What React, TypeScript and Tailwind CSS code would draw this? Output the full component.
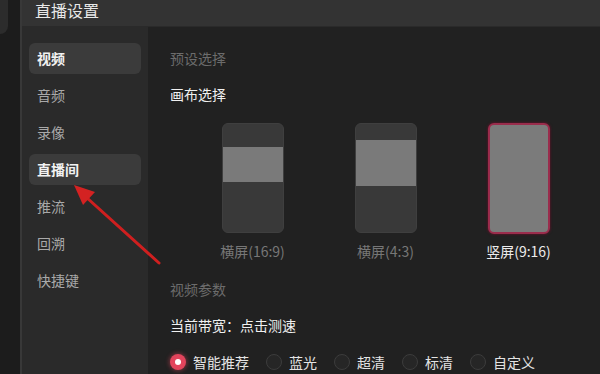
import React from "react";

const font = { fontFamily: '"Noto Sans CJK SC", "Noto Sans", sans-serif' };

function Radio({ checked, label }: { checked?: boolean; label: string }) {
  return (
    <div className="flex items-center gap-[7px]">
      {checked ? (
        <div className="w-[16px] h-[16px] rounded-full bg-[#e2445c] flex items-center justify-center shadow-[0_0_4px_1px_rgba(226,68,92,0.45)]">
          <div className="w-[6px] h-[6px] rounded-full bg-white" />
        </div>
      ) : (
        <div className="w-[16px] h-[16px] rounded-full border border-[#3c3c3c] bg-[#262626]" />
      )}
      <span className="text-[14px] leading-[18px] text-[#e4e4e4]">{label}</span>
    </div>
  );
}

export default function App() {
  const items = ["视频", "音频", "录像", "直播间", "推流", "回溯", "快捷键"];
  const selected = [0, 3];
  return (
    <div className="relative w-[600px] h-[374px] overflow-hidden bg-[#1c1c1c] flex" style={font}>
      <div className="w-[20px] shrink-0 bg-[#1c1c1c]">
        <div className="w-[8px] h-[34px] bg-[#2c2c2c] rounded-br-[8px]" />
      </div>
      <div className="flex-1 flex flex-col border-l-2 border-[#383838]">
        <div className="h-[27px] shrink-0 bg-[#333333] border-b border-[#2a2a2a] flex items-start pl-[13px] pt-[1px]">
          <span className="text-[16px] leading-[19px] text-[#e8e8e8]">直播设置</span>
        </div>
        <div className="flex-1 flex">
          <div className="w-[126px] shrink-0 bg-[#2a2a2a] px-[7px] pt-[16px] flex flex-col gap-[6px]">
            {items.map((t, i) => {
              const sel = selected.includes(i);
              return (
                <div
                  key={t}
                  className={
                    sel
                      ? "h-[31px] rounded-[6px] bg-[#3b3b3b] flex items-center pl-[8px] text-[14px] text-[#f2f2f2] font-bold"
                      : "h-[31px] rounded-[6px] flex items-center pl-[8px] text-[14px] text-[#a9a9a9]"
                  }
                >
                  {t}
                </div>
              );
            })}
          </div>
          <div className="flex-1 bg-[#212121] pl-[22px] pt-[22px] flex flex-col">
            <div className="text-[14px] leading-[18px] text-[#6c6c6c]">预设选择</div>
            <div className="mt-[18px] text-[14px] leading-[18px] text-[#f0f0f0]">画布选择</div>
            <div className="mt-[20px] ml-[16px] grid grid-cols-[133px_133px_133px]">
              <div className="flex flex-col items-center">
                <div className="w-[62px] h-[110px] rounded-[6px] bg-[#393939] border border-[#3f3f3f] overflow-hidden flex flex-col">
                  <div className="h-[23px]" />
                  <div className="h-[35px] bg-[#7a7a7a]" />
                </div>
                <div className="mt-[9px] text-[14px] leading-[18px] text-[#777777]">横屏(16:9)</div>
              </div>
              <div className="flex flex-col items-center">
                <div className="w-[62px] h-[110px] rounded-[6px] bg-[#393939] border border-[#3f3f3f] overflow-hidden flex flex-col">
                  <div className="h-[16px]" />
                  <div className="h-[46px] bg-[#7a7a7a]" />
                </div>
                <div className="mt-[9px] text-[14px] leading-[18px] text-[#777777]">横屏(4:3)</div>
              </div>
              <div className="flex flex-col items-center">
                <div className="w-[62px] h-[111px] rounded-[6px] bg-[#7b7b7b] border-2 border-[#9a2c4c] shadow-[0_0_2px_1px_rgba(90,20,40,0.7)]" />
                <div className="mt-[8px] text-[14px] leading-[18px] text-[#ececec]">竖屏(9:16)</div>
              </div>
            </div>
            <div className="mt-[20px] text-[14px] leading-[18px] text-[#6c6c6c]">视频参数</div>
            <div className="mt-[18px] text-[14px] leading-[18px] text-[#f0f0f0]">当前带宽：点击测速</div>
            <div className="mt-[19px] flex items-center gap-[17px]">
              <Radio checked label="智能推荐" />
              <Radio label="蓝光" />
              <Radio label="超清" />
              <Radio label="标清" />
              <Radio label="自定义" />
            </div>
          </div>
        </div>
      </div>
      <svg className="absolute left-0 top-0 pointer-events-none" width="600" height="374">
        <line x1="159" y1="263" x2="86" y2="197" stroke="#cf1f1f" strokeWidth="3" strokeLinecap="round" />
        <polygon points="74,185 95,192 83,205" fill="#d42222" />
      </svg>
    </div>
  );
}
